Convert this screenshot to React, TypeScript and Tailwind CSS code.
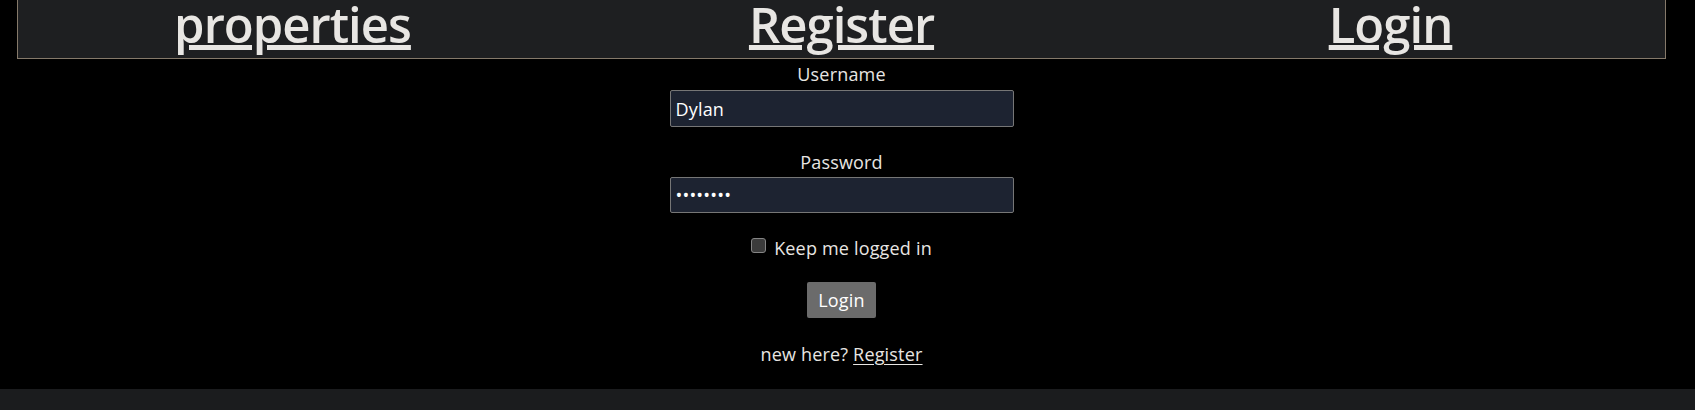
import { useState } from "react";

const navLinks = ["properties", "Register", "Login"];

export default function App() {
  const [username, setUsername] = useState("Dylan");
  const [password, setPassword] = useState("password");
  const [keep, setKeep] = useState(false);

  return (
    <div className="min-h-[410px] bg-black text-[#e8e6e3] font-['Open_Sans',sans-serif] flex flex-col">
      <div className="ml-[17px] w-[1649px]">
        {/* nav bar, top edge scrolled out of view */}
        <nav className="h-[59px] grid grid-cols-3 items-end bg-[#1e1f21] border-x border-b border-[#85796a]">
          {navLinks.map((label) => (
            <div key={label} className="flex justify-center">
              <a
                href="#"
                className="text-[49px] font-semibold leading-none tracking-[-0.02em] underline decoration-[5px] underline-offset-[2px] text-[#e8e6e3] mb-[16px]"
              >
                {label}
              </a>
            </div>
          ))}
        </nav>

        <form
          className="flex flex-col items-center text-[18px] leading-[24px] tracking-[0.01em]"
          onSubmit={(e) => e.preventDefault()}
        >
          <label htmlFor="username" className="mt-[3px]">Username</label>
          <input
            id="username"
            value={username}
            onChange={(e) => setUsername(e.target.value)}
            className="mt-[4px] w-[344px] h-[37px] px-[5px] bg-[#1d2331] border border-[#767676] rounded-[2px] text-white outline-none"
          />

          <label htmlFor="password" className="mt-[23px]">Password</label>
          <input
            id="password"
            type="password"
            value={password}
            onChange={(e) => setPassword(e.target.value)}
            className="mt-[3px] w-[344px] h-[36px] px-[5px] bg-[#1d2331] border border-[#767676] rounded-[2px] text-white outline-none"
          />

          <label className="mt-[23px] flex items-center gap-[8px]">
            <input
              type="checkbox"
              checked={keep}
              onChange={(e) => setKeep(e.target.checked)}
              className="appearance-none w-[15px] h-[15px] -mt-[5px] bg-[#3b3b3b] border border-[#858585] rounded-[3px]"
            />
            <span>Keep me logged in</span>
          </label>

          <button type="submit" className="mt-[22px] h-[36px] px-[11px] bg-[#6b6b6b] text-white rounded-[2px]">
            Login
          </button>

          <p className="mt-[24px]">
            new here? <a href="#" className="underline underline-offset-[3px]">Register</a>
          </p>
        </form>
      </div>

      <div className="mt-auto h-[21px] bg-[#1b1c1e]" />
    </div>
  );
}
